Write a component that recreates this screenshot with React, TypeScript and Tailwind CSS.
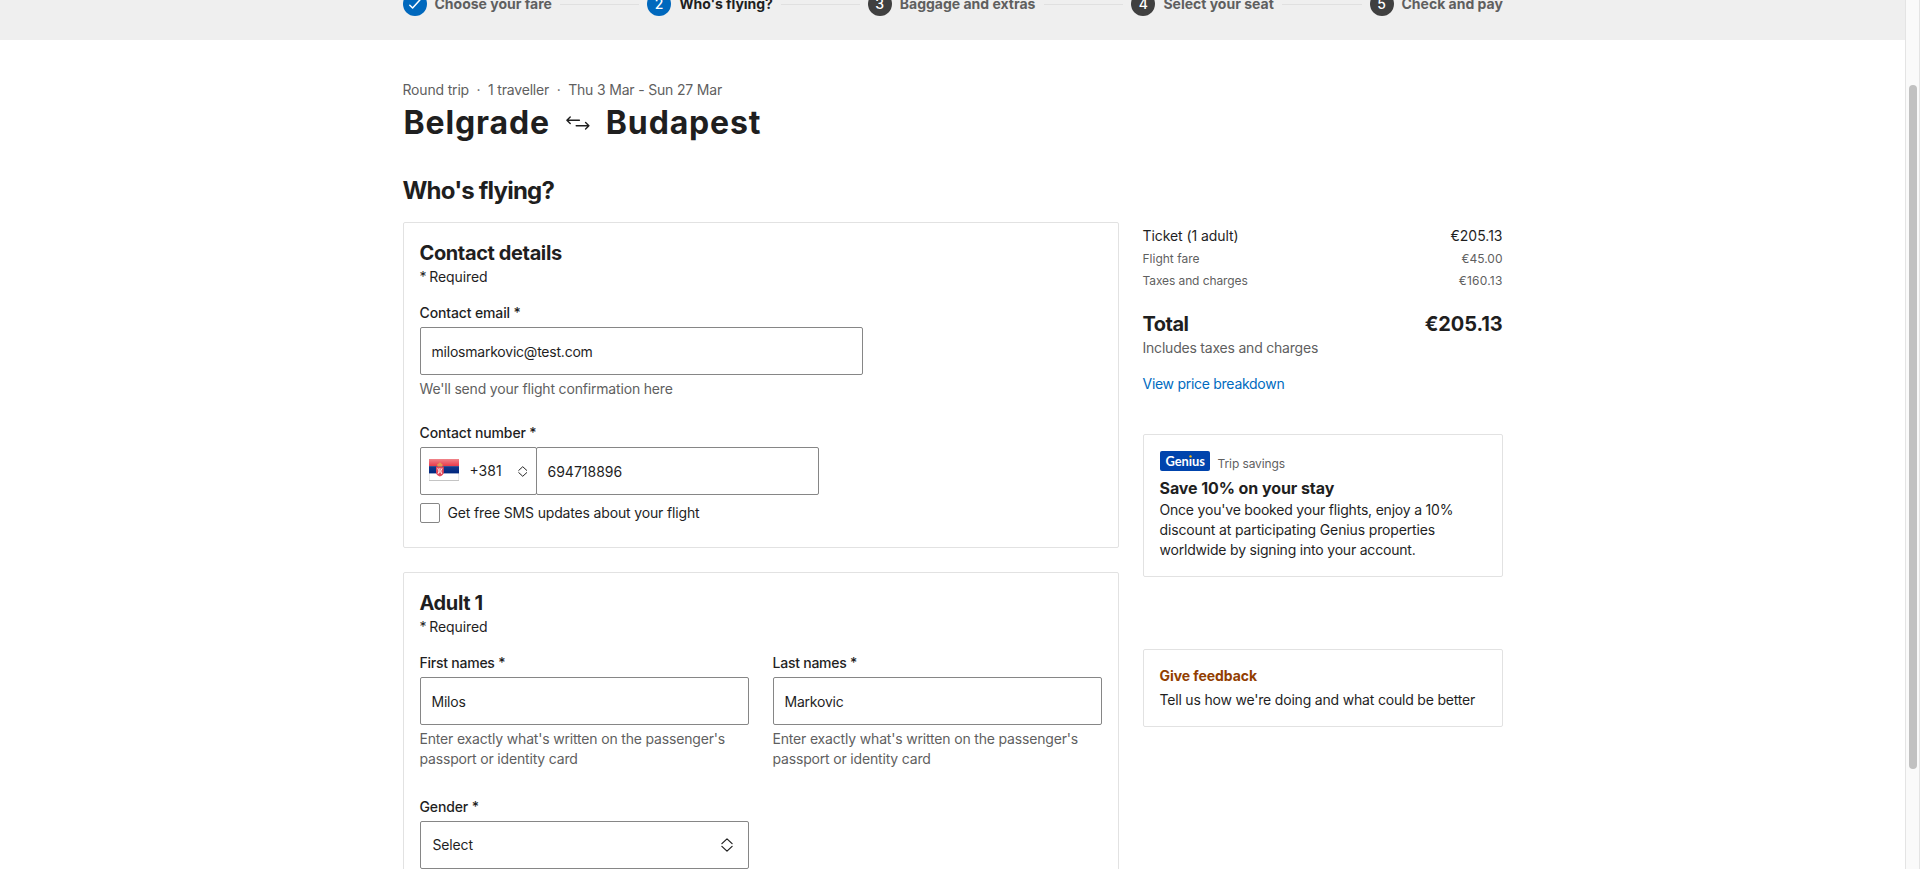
import React from "react";

const steps = [
  { label: "Choose your fare", state: "done", width: "w-[117.5px]" },
  { label: "Who's flying?", state: "current", width: "w-[93.5px]" },
  { label: "Baggage and extras", state: "next", width: "w-[136.5px]" },
  { label: "Select your seat", state: "next", width: "w-[111px]" },
  { label: "Check and pay", state: "next", width: "w-[101px]" },
];

function Stepper() {
  return (
    <ol className="-mt-2 flex h-6 w-full items-center gap-2">
      {steps.map((s, i) => (
        <React.Fragment key={s.label}>
          {i > 0 && <li aria-hidden className="h-px flex-1 bg-[#e0e0e0]" />}
          <li className="flex items-center gap-2">
            <span
              className={
                "flex size-6 items-center justify-center rounded-full text-sm font-medium text-white " +
                (s.state === "next" ? "bg-[#404040]" : "bg-[#0068bd]")
              }
            >
              {s.state === "done" ? (
                <svg viewBox="0 0 24 24" className="size-6" fill="none" stroke="currentColor" strokeWidth="1.5" strokeLinecap="round" strokeLinejoin="round">
                  <path d="M6.8 13.2 9.6 16 17.4 7.4" />
                </svg>
              ) : (
                i + 1
              )}
            </span>
            <span
              className={
                "whitespace-nowrap text-sm font-bold " +
                s.width +
                (s.state === "current" ? " tracking-[-0.07px] text-[#1f1f1f]" : " text-[#5f5f5f]")
              }
            >
              {s.label}
            </span>
          </li>
        </React.Fragment>
      ))}
    </ol>
  );
}

function UpDown({ className }: { className: string }) {
  return (
    <svg viewBox="0 0 12 14" className={className} fill="none" stroke="#1f1f1f" strokeWidth="1.25" strokeLinecap="round" strokeLinejoin="round">
      <path d="M.9 5.6 6 .9l5.1 4.7M.9 8.4 6 13.1l5.1-4.7" />
    </svg>
  );
}

function Flag() {
  return (
    <svg viewBox="0 0 30 22" className="mb-[3px] h-[22px] w-[30px]">
      <defs>
        <linearGradient id="flag-red" x1="0" y1="0" x2="0" y2="1">
          <stop offset="0" stopColor="#f0858a" />
          <stop offset="1" stopColor="#e8384a" />
        </linearGradient>
        <linearGradient id="flag-blue" x1="0" y1="0" x2="0" y2="1">
          <stop offset="0" stopColor="#123a8c" />
          <stop offset="1" stopColor="#00267f" />
        </linearGradient>
      </defs>
      <rect width="30" height="22" rx=".6" fill="#c4c4c4" />
      <rect x=".4" y="14" width="29.2" height="7" fill="#fff" />
      <rect width="30" height="7.2" fill="url(#flag-red)" />
      <rect y="7.2" width="30" height="7.2" fill="url(#flag-blue)" />
      <path d="M7 7.6h7.8v5.4q0 3.3-3.9 4.6-3.9-1.3-3.9-4.6z" fill="#e4485a" />
      <path d="M8.7 9.2 10 12 9 15M13.1 9.2 11.8 12 12.8 15M10.9 9v5" stroke="#fbe4e6" strokeWidth="1" fill="none" />
      <path d="M8.6 7.4q-1.2-2.3.8-2.6.6-1.2 1.5-1.2t1.5 1.2q2 .3.8 2.6z" fill="#e39a52" />
    </svg>
  );
}

function Label({ children }: { children: React.ReactNode }) {
  return <div className="mb-1 font-medium tracking-[-0.13px]">{children}</div>;
}

function Hint({ children }: { children: React.ReactNode }) {
  return <div className="mt-1 whitespace-pre-line tracking-[-0.175px] text-[#5f5f5f]">{children}</div>;
}

const field = "flex h-12 items-center rounded-[2px] border border-[#868686] bg-white pt-0.5 pl-[11px] tracking-[-0.22px]";

function CardTitle({ children }: { children: React.ReactNode }) {
  return (
    <>
      <h3 className="text-xl leading-7 font-bold tracking-[-0.38px]">{children}</h3>
      <p className="tracking-[-0.1px] [word-spacing:-1px]">* Required</p>
    </>
  );
}

const passportHint = "Enter exactly what's written on the passenger's\npassport or identity card";

export default function App() {
  return (
    <div className="flex h-[869px] overflow-hidden bg-white font-['Inter',sans-serif] text-sm leading-5 text-[#1f1f1f]">
      <div className="flex-1">
        <header className="h-10 overflow-hidden bg-[#efefef]">
          <div className="mx-auto w-[1100px]">
            <Stepper />
          </div>
        </header>

        <main className="mx-auto w-[1100px] pt-10">
          <div className="flex tracking-[-0.18px] text-[#5f5f5f]">
            <span>Round trip</span>
            <span className="w-[19px] text-center">·</span>
            <span>1 traveller</span>
            <span className="w-[19px] text-center">·</span>
            <span>Thu 3 Mar - Sun 27 Mar</span>
          </div>
          <h1 className="mt-0.5 flex items-center pl-px text-[32px] leading-[41px] font-bold tracking-[0.85px]">
            <span>Belgrade</span>
            <svg viewBox="0 0 24 14" className="mr-4 ml-4 h-3.5 w-6" fill="none" stroke="#1f1f1f" strokeWidth="1.4" strokeLinecap="round" strokeLinejoin="round">
              <path d="M4.2.9.9 4.2 4.2 7.5M.9 4.2H13.4M19.6 6.5 22.9 9.8 19.6 13.1M22.9 9.8H10.2" />
            </svg>
            <span>Budapest</span>
          </h1>
          <h2 className="mt-8 text-2xl leading-[31px] font-bold tracking-[-0.8px]">Who's flying?</h2>

          <div className="mt-4 flex items-start gap-6">
            <div className="flex w-[716px] flex-col gap-6">
              <section className="h-[326px] rounded-[2px] border border-[#e2e2e2] p-4">
                <CardTitle>Contact details</CardTitle>
                <div className="mt-4">
                  <Label>Contact email *</Label>
                  <div className={field + " w-[443px]"}>milosmarkovic@test.com</div>
                  <Hint>We'll send your flight confirmation here</Hint>
                </div>
                <div className="mt-6">
                  <Label>Contact number *</Label>
                  <div className="flex">
                    <div className="flex h-12 w-[117px] items-center rounded-[2px] border border-[#868686] pl-2">
                      <Flag />
                      <span className="ml-[11px] w-9">+381</span>
                      <UpDown className="ml-3 h-[11px] w-[9.5px]" />
                    </div>
                    <div className="-ml-px flex h-12 w-[283px] items-center rounded-[2px] border border-[#868686] pt-px pl-[11px]">694718896</div>
                  </div>
                  <div className="mt-2 flex gap-2">
                    <span className="size-5 rounded-[2px] border border-[#868686]" />
                    <span className="tracking-[-0.155px]">Get free SMS updates about your flight</span>
                  </div>
                </div>
              </section>

              <section className="rounded-[2px] border border-[#e2e2e2] p-4">
                <CardTitle>Adult 1</CardTitle>
                <div className="mt-4 grid grid-cols-[329px_329px] gap-6">
                  <div>
                    <Label><span className="tracking-[-0.24px]">First names *</span></Label>
                    <div className={field}>Milos</div>
                    <Hint>{passportHint}</Hint>
                  </div>
                  <div>
                    <Label><span className="tracking-[-0.24px]">Last names *</span></Label>
                    <div className={field}>Markovic</div>
                    <Hint>{passportHint}</Hint>
                  </div>
                </div>
                <div className="mt-7 w-[329px]">
                  <Label>Gender *</Label>
                  <div className="flex h-12 items-center justify-between rounded-[2px] border border-[#868686] pr-[15px] pl-3">
                    <span className="tracking-[-0.15px]">Select</span>
                    <UpDown className="h-[14px] w-3" />
                  </div>
                </div>
              </section>
            </div>

            <aside className="w-[360px] pt-1">
              <div className="flex justify-between">
                <span className="tracking-[-0.08px]">Ticket (1 adult)</span>
                <span>€205.13</span>
              </div>
              <div className="mt-1 flex justify-between text-xs leading-[18px] text-[#5f5f5f]">
                <span>Flight fare</span>
                <span>€45.00</span>
              </div>
              <div className="mt-1 flex justify-between text-xs leading-[18px] text-[#5f5f5f]">
                <span className="tracking-[-0.1px]">Taxes and charges</span>
                <span className="tracking-[0.2px]">€160.13</span>
              </div>
              <div className="mt-5 flex justify-between text-xl leading-7 font-bold">
                <span className="tracking-[-0.5px]">Total</span>
                <span className="tracking-[-0.1px]">€205.13</span>
              </div>
              <div className="tracking-[-0.21px] text-[#5f5f5f]">Includes taxes and charges</div>
              <a className="mt-4 block tracking-[-0.28px] text-[#006bbf]">View price breakdown</a>

              <section className="mt-10 rounded-[2px] border border-[#e2e2e2] p-4">
                <div className="flex h-[25px] gap-2">
                  <svg viewBox="0 0 50 20" className="h-5 w-[50px]">
                    <rect width="50" height="20" rx="2" fill="#0044ad" />
                    <text x="5.4" y="14.5" textLength="39.6" lengthAdjust="spacingAndGlyphs" fontFamily="Lato, sans-serif" fontWeight="700" fontSize="12.8" fill="#fff">Genıus</text>
                    <circle cx="30.5" cy="5.4" r="1.2" fill="#ffb700" />
                  </svg>
                  <span className="pt-[3px] text-xs leading-5 tracking-[-0.1px] text-[#5f5f5f]">Trip savings</span>
                </div>
                <h4 className="text-base leading-6 font-bold tracking-[-0.08px]">Save 10% on your stay</h4>
                <p className="tracking-[-0.2px]">
                  Once you've booked your flights, enjoy a 10%
                  <br />
                  <span className="tracking-[-0.14px]">discount at participating Genius properties</span>
                  <br />
                  worldwide by signing into your account.
                </p>
              </section>

              <section className="mt-[72px] rounded-[2px] border border-[#e2e2e2] p-4">
                <div className="font-bold tracking-[-0.06px] text-[#923e01]">Give feedback</div>
                <p className="mt-1 whitespace-nowrap tracking-[-0.19px]">Tell us how we're doing and what could be better</p>
              </section>
            </aside>
          </div>
        </main>
      </div>

      <div className="w-[15px] border-x border-[#e4e4e4] bg-[#fafafa] pt-[85px] pl-[3px]">
        <div className="h-[684px] w-2 rounded-full bg-[#c1c1c1]" />
      </div>
    </div>
  );
}
